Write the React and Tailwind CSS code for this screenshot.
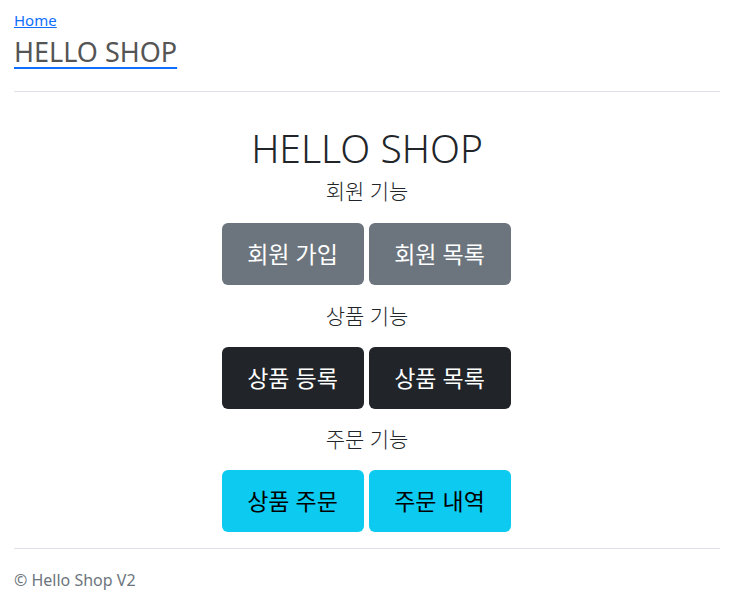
import React from "react";

const sections = [
  {
    title: "회원 기능",
    color: "bg-[#6c757d] text-white",
    buttons: ["회원 가입", "회원 목록"],
    top: "mt-[4px]",
    gap: "mt-[17px]",
  },
  {
    title: "상품 기능",
    color: "bg-[#212529] text-white",
    buttons: ["상품 등록", "상품 목록"],
    top: "mt-[16px]",
    gap: "mt-[16px]",
  },
  {
    title: "주문 기능",
    color: "bg-[#0dcaf0] text-black",
    buttons: ["상품 주문", "주문 내역"],
    top: "mt-[15px]",
    gap: "mt-[16px]",
  },
];

const App = () => {
  return (
    <div
      className="min-h-[602px] bg-white pl-[14px] pr-[19px] text-[#212529]"
      style={{ fontFamily: '"Noto Sans", "Noto Sans CJK KR", sans-serif' }}
    >
      <header className="pt-[8px] pb-[22px] border-b border-[#dee2e6]">
        <a href="#" className="block w-fit text-[15px] leading-[24px] text-[#0d6efd] underline">
          Home
        </a>
        <a
          href="#"
          className="block w-fit mt-[3px] text-[27px] leading-[34px] text-[#555] underline decoration-[#0d6efd] decoration-2 underline-offset-[5px]"
        >
          HELLO SHOP
        </a>
      </header>

      <main className="pt-[32px] pb-[16px] text-center border-b border-[#dee2e6]">
        <h1 className="text-[39px] leading-[48px] font-light">HELLO SHOP</h1>
        {sections.map((s) => (
          <div key={s.title} className={s.top}>
            <p className="text-[21px] leading-[30px] font-light">{s.title}</p>
            <div className={`${s.gap} flex justify-center gap-[5px] pr-[2px]`}>
              {s.buttons.map((b) => (
                <button
                  key={b}
                  className={`w-[142px] h-[62px] rounded-[6px] text-[23px] leading-[30px] ${s.color}`}
                >
                  {b}
                </button>
              ))}
            </div>
          </div>
        ))}
      </main>

      <footer className="pt-[19px] text-[16px] leading-[24px] text-[#6c757d]">
        © Hello Shop V2
      </footer>
    </div>
  );
};

export default App;
